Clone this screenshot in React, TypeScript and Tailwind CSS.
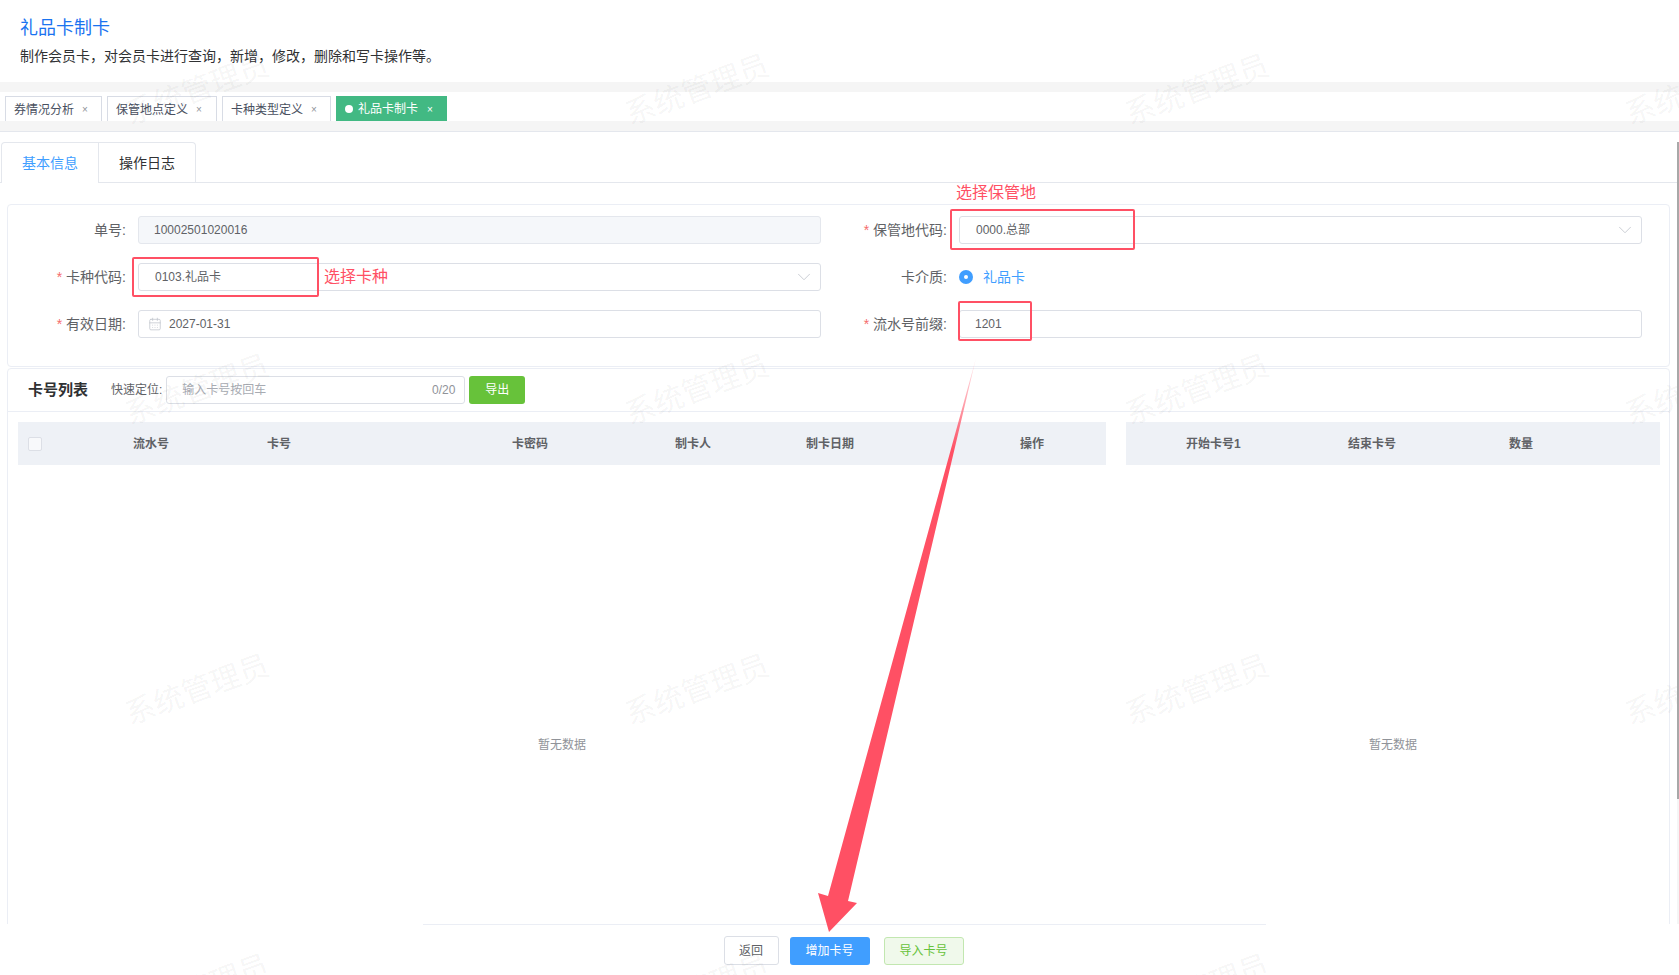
import { CalendarDays, ChevronDown } from "lucide-react";

const PAGE_TABS = [
  { label: "券情况分析", width: "w-[97px]" },
  { label: "保管地点定义", width: "w-[110px]" },
  { label: "卡种类型定义", width: "w-[109px]" },
];

const LEFT_COLUMNS = [
  { label: "流水号", width: "w-[134px]" },
  { label: "卡号", width: "w-[245px]" },
  { label: "卡密码", width: "w-[163px]" },
  { label: "制卡人", width: "w-[131px]" },
  { label: "制卡日期", width: "w-[214px]" },
  { label: "操作", width: "w-[60px]" },
];

const RIGHT_COLUMNS = [
  { label: "开始卡号1", width: "w-[162px]" },
  { label: "结束卡号", width: "w-[161px]" },
  { label: "数量", width: "w-[60px]" },
];

const DESCRIPTION =
  "制作会员卡\uFF0C对会员卡进行查询\uFF0C新增\uFF0C修改\uFF0C删除和写卡操作等\u3002";

const inputBase = "flex h-[28px] items-center rounded-[3px] border border-[#dcdfe6] text-[12px] text-[#606266]";

function Field({ label, required, children }: { label: string; required?: boolean; children: React.ReactNode }) {
  return (
    <div className="flex items-center">
      <label className="w-full shrink text-right text-[14px] text-[#606266]">
        {required && <span className="mr-[4px] text-[#f56c6c]">*</span>}
        {label}:
      </label>
      <div className="ml-[12px] w-[683px] shrink-0">{children}</div>
    </div>
  );
}

function SelectBox({ value }: { value: string }) {
  return (
    <div className={`${inputBase} justify-between pr-[5px] pl-[16px]`}>
      <span>{value}</span>
      <ChevronDown className="h-[22px] w-[22px] text-[#c0c4cc]" strokeWidth={0.9} />
    </div>
  );
}

function Watermarks() {
  const cells = Array.from({ length: 16 }, (_, i) => i);
  return (
    <div className="pointer-events-none absolute top-[-61px] left-[-53px] z-10 grid grid-cols-[repeat(4,500px)] auto-rows-[300px]">
      {cells.map((i) => (
        <div key={i} className="flex items-center justify-center">
          <span className="-rotate-20 text-[30px] whitespace-nowrap text-black/[0.05]">系统管理员</span>
        </div>
      ))}
    </div>
  );
}

function Annotations() {
  return (
    <>
      <div className="absolute top-[257px] left-[132px] z-20 h-[40px] w-[187px] rounded-[2px] border-2 border-[#ff5064]" />
      <div className="absolute top-[209px] left-[950px] z-20 h-[41px] w-[185px] rounded-[2px] border-2 border-[#ff5064]" />
      <div className="absolute top-[301px] left-[958px] z-20 h-[40px] w-[74px] rounded-[2px] border-2 border-[#ff5064]" />
      <span className="absolute top-[266px] left-[324px] z-20 text-[16px] leading-[22px] text-[#ff5064]">选择卡种</span>
      <span className="absolute top-[182px] left-[956px] z-20 text-[16px] leading-[22px] text-[#ff5064]">选择保管地</span>
      <svg className="pointer-events-none absolute top-0 left-0 z-20 h-[975px] w-[1679px]" viewBox="0 0 1679 975">
        <defs>
          <linearGradient id="arrowFade" x1="976" y1="358" x2="950" y2="450" gradientUnits="userSpaceOnUse">
            <stop offset="0" stopColor="#ff5064" stopOpacity="0.1" />
            <stop offset="1" stopColor="#ff5064" />
          </linearGradient>
        </defs>
        <polygon points="976,358 848,901 857,903 829,932 818,893 828,896" fill="url(#arrowFade)" />
      </svg>
    </>
  );
}

export default function App() {
  return (
    <div
      className="relative flex h-[975px] w-full flex-col overflow-hidden bg-white"
      style={{ fontFamily: '"Liberation Sans", "Noto Sans CJK SC", sans-serif' }}
    >
      <Watermarks />
      <Annotations />

      <header className="h-[82px] shrink-0 pl-[20px]">
        <h1 className="pt-[16px] text-[18px] leading-[24px] font-normal text-[#1a73f0]">礼品卡制卡</h1>
        <p className="mt-[6px] text-[14px] leading-[20px] text-[#303133]">{DESCRIPTION}</p>
      </header>

      <div className="h-[10px] shrink-0 bg-[#f5f5f5]" />
      <nav className="flex h-[29px] shrink-0 items-end gap-[5px] pl-[5px]">
        {PAGE_TABS.map((tab) => (
          <div
            key={tab.label}
            className={`flex h-[25px] items-center border border-b-0 border-[#d8dce5] pt-[1px] pl-[8px] text-[12px] text-[#495060] ${tab.width}`}
          >
            {tab.label}
            <span className="ml-[8px] text-[10px] text-[#909399]">×</span>
          </div>
        ))}
        <div className="flex h-[25px] w-[111px] items-center bg-[#42b983] pt-[1px] pl-[9px] text-[12px] text-white">
          <span className="mr-[5px] h-[8px] w-[8px] rounded-full bg-white" />
          礼品卡制卡
          <span className="ml-[9px] text-[10px]">×</span>
        </div>
      </nav>
      <div className="h-[11px] shrink-0 border-b border-[#e4e7ed] bg-[#f5f5f5]" />

      <main className="min-h-0 flex-1 overflow-hidden pt-[10px]">
        <div className="flex h-[41px] border-b border-[#e4e7ed] pl-[1px] text-[14px]">
          <div className="flex h-[41px] w-[98px] items-center justify-center rounded-tl-[4px] border border-b-0 border-[#e4e7ed] bg-white text-[#409eff]">
            基本信息
          </div>
          <div className="flex h-[41px] w-[97px] items-center justify-center rounded-tr-[4px] border border-b-0 border-l-0 border-[#e4e7ed] text-[#303133]">
            操作日志
          </div>
        </div>

        <div className="mt-[21px] ml-[7px] h-[163px] w-[1663px] rounded-[4px] border border-[#ebeef5] pt-[11px]">
          <div className="grid grid-cols-[813px_821px] gap-y-[19px]">
            <Field label="单号">
              <div className={`${inputBase} border-[#e4e7ed] bg-[#f5f7fa] pl-[15px]`}>10002501020016</div>
            </Field>
            <Field label="保管地代码" required>
              <SelectBox value="0000.总部" />
            </Field>
            <Field label="卡种代码" required>
              <SelectBox value="0103.礼品卡" />
            </Field>
            <Field label="卡介质">
              <div className="flex h-[28px] items-center text-[14px] text-[#409eff]">
                <span className="flex h-[14px] w-[14px] items-center justify-center rounded-full bg-[#409eff]">
                  <span className="h-[4px] w-[4px] rounded-full bg-white" />
                </span>
                <span className="ml-[10px]">礼品卡</span>
              </div>
            </Field>
            <Field label="有效日期" required>
              <div className={`${inputBase} pl-[9px]`}>
                <CalendarDays className="h-[14px] w-[14px] text-[#c0c4cc]" strokeWidth={1.3} />
                <span className="ml-[7px]">2027-01-31</span>
              </div>
            </Field>
            <Field label="流水号前缀" required>
              <div className={`${inputBase} pl-[15px]`}>1201</div>
            </Field>
          </div>
        </div>

        <div className="mt-[1px] ml-[7px] h-[700px] w-[1663px] rounded-[4px] border border-[#ebeef5]">
          <div className="flex h-[43px] items-center border-b border-[#ebeef5] pl-[20px]">
            <span className="text-[15px] font-bold text-[#303133]">卡号列表</span>
            <span className="ml-[23px] text-[12px] text-[#606266]">快速定位:</span>
            <div className={`${inputBase} ml-[4px] w-[299px] justify-between pr-[9px] pl-[15px]`}>
              <span className="text-[#a8abb2]">输入卡号按回车</span>
              <span className="text-[#909399]">0/20</span>
            </div>
            <button
              type="button"
              className="ml-[4px] h-[28px] w-[56px] rounded-[3px] bg-[#67c23a] text-[12px] text-white"
            >
              导出
            </button>
          </div>

          <div className="flex pt-[10px] pl-[10px]">
            <div className="w-[1088px]">
              <div className="flex h-[43px] items-center bg-[#eef1f6] pt-[1px] text-[12px] font-bold text-[#606266]">
                <div className="w-[115px] pl-[10px]">
                  <div className="h-[14px] w-[14px] rounded-[2px] border border-[#dcdfe6] bg-white/60" />
                </div>
                {LEFT_COLUMNS.map((col) => (
                  <div key={col.label} className={col.width}>
                    {col.label}
                  </div>
                ))}
              </div>
              <div className="flex h-[560px] items-center justify-center text-[12px] text-[#909399]">暂无数据</div>
            </div>
            <div className="ml-[20px] w-[534px]">
              <div className="flex h-[43px] items-center bg-[#eef1f6] pt-[1px] pl-[60px] text-[12px] font-bold text-[#606266]">
                {RIGHT_COLUMNS.map((col) => (
                  <div key={col.label} className={col.width}>
                    {col.label}
                  </div>
                ))}
              </div>
              <div className="flex h-[560px] items-center justify-center text-[12px] text-[#909399]">暂无数据</div>
            </div>
          </div>
        </div>
      </main>

      <footer className="h-[51px] shrink-0 bg-white">
        <div className="ml-[423px] flex w-[843px] items-center justify-center gap-[11px] border-t border-[#ebeef5] pt-[11px] pr-[2px] text-[12px]">
          <button type="button" className="h-[29px] w-[55px] rounded-[3px] border border-[#dcdfe6] text-[#606266]">
            返回
          </button>
          <button type="button" className="h-[28px] w-[80px] rounded-[3px] bg-[#409eff] text-white">
            增加卡号
          </button>
          <button
            type="button"
            className="ml-[3px] h-[28px] w-[80px] rounded-[3px] border border-[#c2e7b0] bg-[#f0f9eb] text-[#67c23a]"
          >
            导入卡号
          </button>
        </div>
      </footer>

      <div className="absolute top-[142px] right-0 z-20 h-[782px] w-[2px] bg-[#f5f5f5]">
        <div className="h-[657px] bg-[#a8a8a8]" />
      </div>
    </div>
  );
}
